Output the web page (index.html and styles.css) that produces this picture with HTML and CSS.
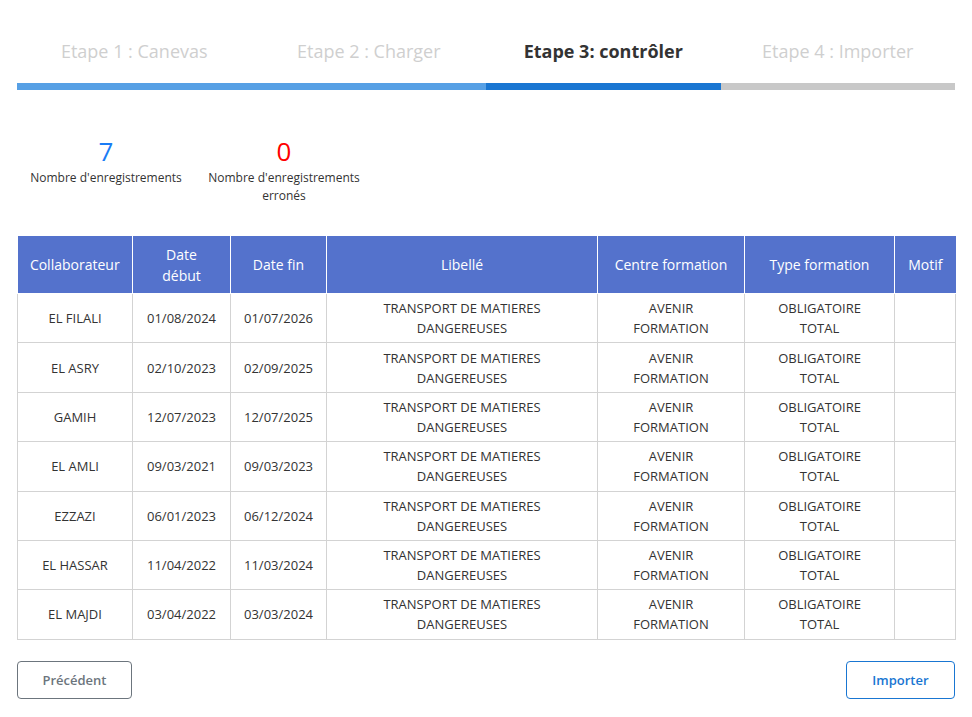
FILE: index.html
```html
<!DOCTYPE html>
<html lang="fr">
<head>
    <meta charset="UTF-8">
    <meta name="viewport" content="width=device-width, initial-scale=1.0">
    <title>Import des formations</title>
    <link rel="stylesheet" href="styles.css">
</head>
<body>
<div class="page">

    <!-- Etapes -->
    <div class="steps">
        <div class="step done">
            <div class="step-title">Etape 1 : Canevas</div>
            <div class="step-bar"></div>
        </div>
        <div class="step done">
            <div class="step-title">Etape 2 : Charger</div>
            <div class="step-bar"></div>
        </div>
        <div class="step active">
            <div class="step-title">Etape 3: contrôler</div>
            <div class="step-bar"></div>
        </div>
        <div class="step">
            <div class="step-title">Etape 4 : Importer</div>
            <div class="step-bar"></div>
        </div>
    </div>

    <!-- Compteurs -->
    <div class="stats">
        <div class="stat">
            <div class="stat-value blue">7</div>
            <div class="stat-label">Nombre d'enregistrements</div>
        </div>
        <div class="stat">
            <div class="stat-value red">0</div>
            <div class="stat-label">Nombre d'enregistrements erronés</div>
        </div>
    </div>

    <table class="grid">
        <colgroup>
            <col style="width:115px">
            <col style="width:98px">
            <col style="width:96px">
            <col style="width:271px">
            <col style="width:147px">
            <col style="width:150px">
            <col style="width:61px">
        </colgroup>
        <thead>
            <tr>
                <th>Collaborateur</th>
                <th>Date<br>début</th>
                <th>Date fin</th>
                <th>Libellé</th>
                <th>Centre formation</th>
                <th>Type formation</th>
                <th>Motif</th>
            </tr>
        </thead>
        <tbody>
            <tr>
                <td>EL FILALI</td><td>01/08/2024</td><td>01/07/2026</td>
                <td>TRANSPORT DE MATIERES<br>DANGEREUSES</td><td>AVENIR<br>FORMATION</td><td>OBLIGATOIRE<br>TOTAL</td><td></td>
            </tr>
            <tr>
                <td>EL ASRY</td><td>02/10/2023</td><td>02/09/2025</td>
                <td>TRANSPORT DE MATIERES<br>DANGEREUSES</td><td>AVENIR<br>FORMATION</td><td>OBLIGATOIRE<br>TOTAL</td><td></td>
            </tr>
            <tr>
                <td>GAMIH</td><td>12/07/2023</td><td>12/07/2025</td>
                <td>TRANSPORT DE MATIERES<br>DANGEREUSES</td><td>AVENIR<br>FORMATION</td><td>OBLIGATOIRE<br>TOTAL</td><td></td>
            </tr>
            <tr>
                <td>EL AMLI</td><td>09/03/2021</td><td>09/03/2023</td>
                <td>TRANSPORT DE MATIERES<br>DANGEREUSES</td><td>AVENIR<br>FORMATION</td><td>OBLIGATOIRE<br>TOTAL</td><td></td>
            </tr>
            <tr>
                <td>EZZAZI</td><td>06/01/2023</td><td>06/12/2024</td>
                <td>TRANSPORT DE MATIERES<br>DANGEREUSES</td><td>AVENIR<br>FORMATION</td><td>OBLIGATOIRE<br>TOTAL</td><td></td>
            </tr>
            <tr>
                <td>EL HASSAR</td><td>11/04/2022</td><td>11/03/2024</td>
                <td>TRANSPORT DE MATIERES<br>DANGEREUSES</td><td>AVENIR<br>FORMATION</td><td>OBLIGATOIRE<br>TOTAL</td><td></td>
            </tr>
            <tr>
                <td>EL MAJDI</td><td>03/04/2022</td><td>03/03/2024</td>
                <td>TRANSPORT DE MATIERES<br>DANGEREUSES</td><td>AVENIR<br>FORMATION</td><td>OBLIGATOIRE<br>TOTAL</td><td></td>
            </tr>
        </tbody>
    </table>

    <div class="actions">
        <button class="btn btn-back">Précédent</button>
        <button class="btn btn-import">Importer</button>
    </div>

</div>
</body>
</html>
```

FILE: styles.css
```css
body {
    margin: 0;
    font-family: "Open Sans", Arial, sans-serif;
    color: #333;
    background: #fff;
}
.page {
    padding: 0 17px;
}
.steps {
    display: flex;
}
.step {
    flex: 1;
}
.step-title {
    margin-top: 38px;
    height: 26px;
    line-height: 26px;
    font-size: 18px;
    text-align: center;
    color: #cfcfcf;
}
.step.active .step-title {
    color: #333;
    font-weight: bold;
}
.step-bar {
    margin-top: 19px;
    height: 7px;
    background-color: #c8c8c8;
}
.step.done .step-bar {
    background-color: #57a0e5;
}
.step.active .step-bar {
    background-color: #1976d2;
}
.stats {
    display: flex;
    gap: 18px;
    margin-top: 45px;
    padding-left: 9px;
}
.stat {
    width: 160px;
    text-align: center;
}
.stat-value {
    font-size: 26px;
    line-height: 32px;
}
.stat-value.blue {
    color: #1a7cf5;
}
.stat-value.red {
    color: #ff0000;
}
.stat-label {
    margin-top: 2px;
    font-size: 12px;
    line-height: 18px;
    color: #333;
}
.grid {
    margin-top: 31px;
    width: 100%;
    border-collapse: collapse;
    table-layout: fixed;
}
.grid th {
    background-color: #5472cc;
    color: white;
    font-weight: normal;
    font-size: 14px;
    line-height: 21px;
    padding: 7.5px 4px;
    border: 1px solid white;
    border-top: none;
}
.grid th:first-child {
    border-left: none;
}
.grid th:last-child {
    border-right: none;
}
.grid td {
    text-align: center;
    font-size: 13px;
    line-height: 20px;
    padding: 4.2px 4px;
    border: 1px solid #d3d3d3;
    color: #333;
}
.actions {
    display: flex;
    justify-content: space-between;
    margin-top: 21px;
}
.btn {
    height: 38px;
    background: white;
    border-radius: 4px;
    font-family: "Open Sans", Arial, sans-serif;
    font-size: 13px;
    font-weight: 600;
    cursor: pointer;
}
.btn-back {
    width: 115px;
    border: 1px solid #6c757d;
    color: #6c757d;
}
.btn-import {
    width: 109px;
    border: 1px solid #1976d2;
    color: #1976d2;
}
```
